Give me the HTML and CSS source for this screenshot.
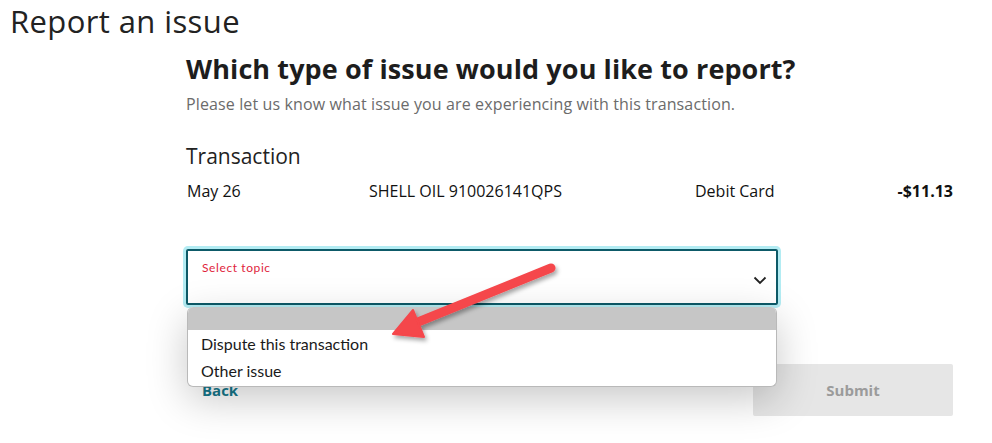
FILE: index.html
```html
<!DOCTYPE html>
<html lang="en">
<head>
  <meta charset="UTF-8">
  <meta name="viewport" content="width=device-width, initial-scale=1.0">
  <title>Report an issue</title>
  <link rel="stylesheet" href="styles.css">
</head>
<body>
  <h1 class="page-title">Report an issue</h1>

  <main class="report">
    <h2 class="report-heading">Which type of issue would you like to report?</h2>
    <p class="report-intro">Please let us know what issue you are experiencing with this transaction.</p>

    <h3 class="section-title">Transaction</h3>
    <div class="txn-row">
      <span class="txn-date">May 26</span>
      <span class="txn-name">SHELL OIL 910026141QPS</span>
      <span class="txn-type">Debit Card</span>
      <span class="txn-amount">-$11.13</span>
    </div>

    <div class="field">
      <div class="select-box">
        <span class="select-label">Select topic</span>
        <svg class="chevron" width="14" height="9" viewBox="0 0 14 9">
          <path d="M1.5 1.5 L7 7 L12.5 1.5" fill="none" stroke="#222" stroke-width="1.8"/>
        </svg>
      </div>
      <ul class="options">
        <li class="option option-blank"></li>
        <li class="option">Dispute this transaction</li>
        <li class="option">Other issue</li>
      </ul>
    </div>

    <div class="actions">
      <a class="back-link" href="#">Back</a>
      <button class="submit-btn" disabled>Submit</button>
    </div>
  </main>

  <!-- annotation arrow -->
  <svg class="annotation" width="992" height="443" viewBox="0 0 992 443">
    <defs>
      <filter id="drop" x="-20%" y="-20%" width="140%" height="140%">
        <feDropShadow dx="2" dy="3" stdDeviation="2" flood-color="#000" flood-opacity="0.35"/>
      </filter>
    </defs>
    <g filter="url(#drop)" fill="#f5464b" stroke="#f5464b">
      <line x1="551" y1="268" x2="418" y2="322" stroke-width="9" stroke-linecap="round"/>
      <polygon points="393,334 413,310 424,337" stroke-width="2" stroke-linejoin="round"/>
    </g>
  </svg>
</body>
</html>
```

FILE: styles.css
```css
body {
  margin: 0;
  font-family: "Open Sans", "Lato", sans-serif;
  color: #1f1f1f;
  background: #fff;
  position: relative;
  height: 443px;
  overflow: hidden;
}

.page-title {
  margin: 0;
  padding: 2px 0 0 10px;
  font-size: 31px;
  font-weight: 400;
  line-height: 38px;
  letter-spacing: 0.4px;
  color: #222;
}

.report {
  padding-left: 186px;
  width: 767px;
}

.report-heading {
  margin: 13px 0 0;
  font-size: 27px;
  line-height: 32px;
  font-weight: 700;
  letter-spacing: 0.1px;
  color: #1d1d1d;
}

.report-intro {
  margin: 9px 0 0;
  font-size: 16px;
  line-height: 20px;
  letter-spacing: 0.12px;
  color: #6b6b6b;
}

.section-title {
  margin: 29px 0 0;
  font-size: 21px;
  line-height: 26px;
  font-weight: 500;
  color: #222;
}

.txn-row {
  display: flex;
  margin-top: 12px;
  font-size: 16px;
  line-height: 20px;
  color: #111;
}

.txn-date {
  width: 182px;
  padding-left: 1px;
}

.txn-name {
  width: 326px;
}

.txn-type {
  flex: 1;
}

.txn-amount {
  font-weight: 700;
}

.field {
  position: relative;
  margin-top: 48px;
  width: 592px;
}

.select-box {
  box-sizing: border-box;
  height: 56px;
  border: 2px solid #0d5a68;
  border-radius: 2px;
  box-shadow: 0 0 0 3px #b3ecf3;
  position: relative;
  padding: 4px 14px;
}

.select-label {
  font-family: "Lato", sans-serif;
  font-size: 12px;
  color: #e01e3c;
  letter-spacing: 0.6px;
}

.chevron {
  position: absolute;
  right: 9px;
  top: 25px;
}

.options {
  position: absolute;
  top: 58px;
  left: 1px;
  right: 1px;
  margin: 0;
  padding: 0 0 2px;
  list-style: none;
  background: #fff;
  border: 1px solid #b9b9b9;
  border-top: none;
  border-radius: 6px;
  box-shadow: 0 12px 40px rgba(0, 0, 0, 0.22);
  overflow: hidden;
  z-index: 2;
  font-family: "Lato", sans-serif;
}

.option {
  padding: 0 13px;
  font-size: 16px;
  line-height: 27px;
  color: #1a1a1a;
}

.option-blank {
  height: 23px;
  background: #c6c6c6;
}

.actions {
  display: flex;
  justify-content: space-between;
  align-items: center;
  margin-top: 59px;
}

.back-link {
  margin-left: 16px;
  font-size: 15px;
  font-weight: 700;
  color: #16788c;
  text-decoration: none;
}

.submit-btn {
  width: 200px;
  height: 52px;
  border: none;
  border-radius: 2px;
  background: #e6e6e6;
  color: #9b9b9b;
  font-family: inherit;
  font-size: 15px;
  font-weight: 700;
}

.annotation {
  position: absolute;
  left: 0;
  top: 0;
  pointer-events: none;
  z-index: 5;
}
```
